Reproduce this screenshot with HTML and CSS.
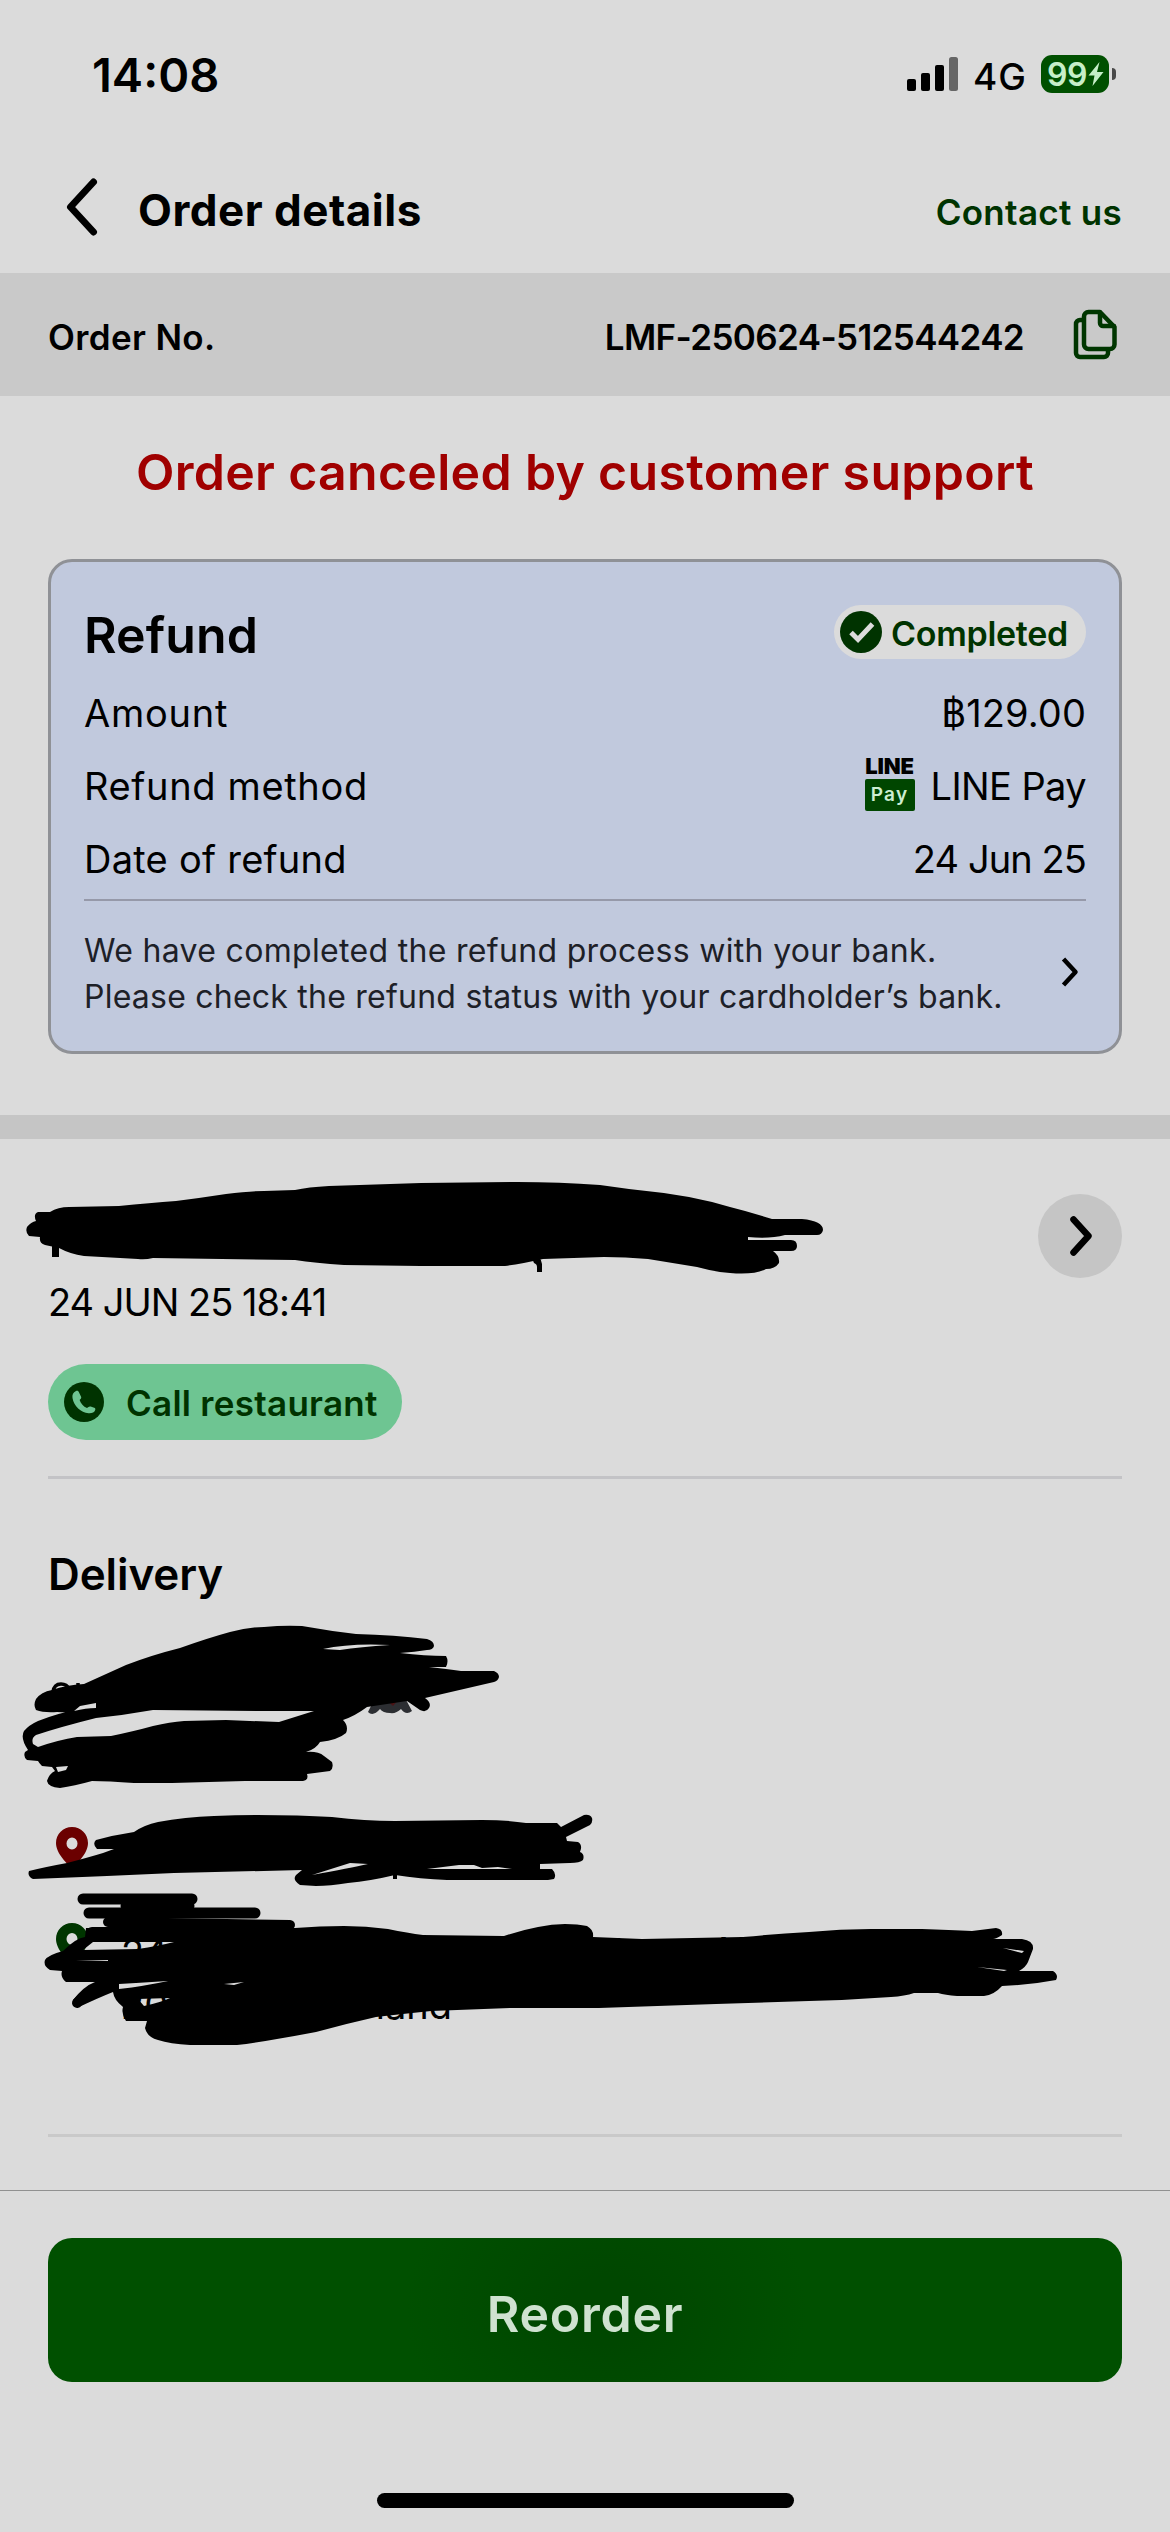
FILE: index.html
```html
<!DOCTYPE html>
<html lang="en">
<head>
<meta charset="utf-8">
<title>Order details</title>
<link rel="stylesheet" href="styles.css">
</head>
<body>
<div class="status">
  <span class="time">14:08</span>
  <div class="status-icons">
    <svg class="signal" width="52" height="34" viewBox="0 0 52 34"><rect y="22" width="9" height="12" rx="2"/><rect x="14" y="16" width="9" height="18" rx="2"/><rect x="28" y="8" width="9" height="26" rx="2"/><rect x="42" width="9" height="34" rx="2.5" fill="#666"/></svg>
    <span class="network">4G</span>
    <div class="battery">
      <div class="battery-body"><span>99</span><svg width="16" height="24" viewBox="0 0 16 24"><path d="M11.5 0L.5 13.5h6L4.5 24 15.5 10H9z" fill="#c6efc8"/></svg></div>
      <i class="battery-tip"></i>
    </div>
  </div>
</div>

<header class="header">
  <svg class="back" width="36" height="60" viewBox="0 0 36 60"><path d="M31.500 5L8.500 30l23 25" fill="none" stroke="#000" stroke-width="7" stroke-linecap="round" stroke-linejoin="round"/></svg>
  <h1>Order details</h1>
  <a class="contact">Contact us</a>
</header>

<div class="order-no">
  <span class="order-label">Order No.</span>
  <span class="order-id">LMF-250624-512544242</span>
  <svg class="copy" width="44" height="52" viewBox="0 0 44 52" fill="none" stroke="#003600" stroke-width="4.500" stroke-linejoin="round" stroke-linecap="round"><path d="M9.500 11H7a4 4 0 0 0-4 4v29a4 4 0 0 0 4 4h24a4 4 0 0 0 4-4v-2.500"/><path d="M15.500 3H27l14.500 15v17.500a4.500 4.500 0 0 1-4.500 4.500H15.500a4.500 4.500 0 0 1-4.500-4.500V7.500A4.500 4.500 0 0 1 15.500 3z"/><path d="M27 3.500V14a3 3 0 0 0 3 3h11"/></svg>
</div>

<section class="refund-section">
  <h2 class="alert">Order canceled by customer support</h2>
  <div class="card">
    <div class="row row-head">
      <span class="card-title">Refund</span>
      <span class="badge"><svg width="42" height="42" viewBox="0 0 42 42"><circle cx="21" cy="21" r="21" fill="#003300"/><path d="M11 21.500l7 7L32.500 13" fill="none" stroke="#dcdcdc" stroke-width="5"/></svg><span>Completed</span></span>
    </div>
    <div class="row"><span class="amount-label">Amount</span><span class="amount">฿129.00</span></div>
    <div class="row"><span class="method-label">Refund method</span><span class="pay"><span class="pay-logo"><b>LINE</b><i>Pay</i></span>LINE Pay</span></div>
    <div class="row"><span class="date-label">Date of refund</span><span class="date">24 Jun 25</span></div>
    <div class="note">
      <p>We have completed the refund process with your bank.<br><span>Please check the refund status with your cardholder’s bank.</span></p>
      <svg width="20" height="32" viewBox="0 0 20 32"><path d="M3.500 3l12 13-12 13" fill="none" stroke="#000" stroke-width="4.500" stroke-linejoin="round"/></svg>
    </div>
  </div>
</section>

<section class="restaurant">
  <div class="restaurant-main">
    <div class="when">24 JUN 25 18:41</div>
    <a class="call"><svg width="40" height="40" viewBox="0 0 40 40"><circle cx="20" cy="20" r="20" fill="#003300"/><path d="M12 9c-2.800 1.200-4 4-3.500 7 1.300 8.500 8.500 14.500 16 15.300 3.200.3 6-1 6.700-3.300.4-1.200 0-1.800-1-2.200l-3.600-1.200c-.8-.3-1.500 0-2.100.4l-1.500 1c-3.600-1.500-6.200-4.300-7.400-8l1.200-1.300c.5-.6.6-1.200.3-2l-2.300-4.700c-.5-1-1.500-1.500-2.800-1z" fill="#6ec592"/></svg><span>Call restaurant</span></a>
  </div>
  <span class="go"><svg width="26" height="44" viewBox="0 0 26 44"><path d="M6.500 5.500L21.500 22 6.500 38.500" fill="none" stroke="#000" stroke-width="6.500" stroke-linejoin="round" stroke-linecap="round"/></svg></span>
  <svg class="ink" viewBox="0 1139 1170 340">
    <path d="M52 1240h7v17h-7zM531 1256l3 7q3 1 3 4v5h5v-8q-1-5-4-8z"/>
    <path d="M38 1212L50 1212Q58 1207 69 1207L119 1206Q150 1203 176 1201Q200 1198 226 1194Q250 1191 264 1191L295 1190Q308 1187 329 1186L421 1183L517 1182Q560 1182 600 1185L629 1189Q660 1192 689 1197Q710 1201 730 1207Q750 1212 772 1219L802 1219Q823 1221 823 1230Q822 1235 817 1235L785 1235Q770 1239 748 1237L748 1240L791 1240Q797 1240 797 1246Q797 1251 791 1251L773 1251Q780 1256 779 1263Q775 1269 766 1269Q755 1275 730 1273Q715 1272 697 1267L648 1259Q625 1257 604 1257L543 1259Q520 1264 505 1266L421 1266L344 1265Q315 1263 295 1260L153 1258Q145 1260 138 1259L84 1256Q70 1254 59 1248L45 1245Q39 1243 40 1237L29 1236Q25 1232 27 1227Q31 1222 36 1221Q33 1214 38 1212Z"/>
  </svg>
</section>

<section class="delivery">
  <h2>Delivery</h2>
  <div class="stops">
    <svg width="32" height="42" viewBox="0 0 32 42"><path fill-rule="evenodd" d="M16 0C7 0 0 7 0 16c0 11 12 21 16 26 4-5 16-15 16-26C32 7 25 0 16 0zm0 10.500a5.500 6 0 1 1 0 12 5.500 6 0 0 1 0-12z" fill="#6b0000"/></svg>
    <svg width="32" height="42" viewBox="0 0 32 42"><path fill-rule="evenodd" d="M16 0C7 0 0 7 0 16c0 11 12 21 16 26 4-5 16-15 16-26C32 7 25 0 16 0zm0 10a5.500 6 0 1 1 0 12 5.500 6 0 0 1 0-12z" fill="#003600"/></svg>
  </div>
  <svg class="ink" viewBox="0 1479 1170 655">
    <!-- text left showing at the edges of the marker -->
    <g font-size="38"><text x="586" y="1966">Ch</text><text x="718" y="1965">N</text><text x="452" y="2019" text-anchor="end">land</text></g>
    <path d="M368 1712L376 1696H404L412 1711Q406 1716 401 1709Q396 1714 390 1713Q383 1713 380 1709Q373 1717 368 1712Z" fill="#2c2e32"/>
    <path d="M385 1699h14l-6 7z" fill="#4b1416"/>
    <path d="M53 1692Q54 1684 61 1684Q67 1684 69 1689M78 1683v6" stroke="#000" stroke-width="3.500" fill="none"/>

    <!-- name and phone -->
    <path d="M36 1710Q33 1705 36 1699Q41 1692 52 1690Q66 1685 84 1684L126 1665Q152 1655 180 1648Q208 1638 230 1632Q248 1627 264 1627Q284 1625 302 1626Q330 1631 356 1634Q395 1635 427 1639Q434 1641 434 1646Q433 1650 427 1650Q415 1652 400 1653Q425 1656 446 1656Q449 1661 446 1667L429 1667Q447 1669 461 1671L494 1671Q499 1673 499 1677Q498 1681 494 1682L425 1698Q432 1703 429 1708Q426 1713 420 1710L407 1701L367 1707Q355 1716 343 1720Q349 1726 346 1733Q338 1740 320 1742Q316 1749 306 1752Q318 1751 324 1756L332 1762Q334 1768 330 1771L307 1774Q309 1780 303 1781L245 1781L172 1783L134 1783Q108 1781 92 1781Q74 1786 60 1788Q48 1787 47 1781Q49 1774 55 1771L52 1767L42 1766Q39 1763 38 1761L27 1760Q23 1757 25 1752L28 1750Q20 1738 24 1731Q29 1725 38 1721Q58 1713 84 1708Q70 1713 57 1712Q44 1713 36 1710Z"/>
    <path d="M96 1718Q60 1727 36 1735Q31 1738 33 1744L38 1747Q58 1740 77 1737L111 1736Q135 1731 153 1726Q170 1722 184 1721L226 1720L279 1722L314 1711L268 1711L153 1710Q125 1715 96 1718Z" fill="#dbdbdb"/>
    <path d="M323 1649Q350 1643 390 1645Q360 1647 340 1650Z" fill="#dbdbdb"/>
    <path d="M80 1706L96 1703V1708Q86 1708 74 1711ZM56 1767L68 1766L66 1770L58 1772Z" fill="#dbdbdb"/>

    <!-- pickup place -->
    <path d="M97 1849Q92 1844 96 1840Q114 1835 134 1832Q144 1825 158 1822Q185 1817 214 1816Q236 1815 257 1815Q300 1815 332 1817Q365 1821 395 1821L482 1820Q508 1820 526 1823L557 1823L561 1827L584 1815Q590 1814 592 1818Q593 1822 590 1825L566 1837L567 1841L578 1842Q583 1845 580 1852Q585 1854 583 1860Q580 1863 570 1863L540 1864V1869L552 1869Q557 1874 554 1879L548 1880L447 1880Q420 1879 395 1875Q370 1881 348 1883Q330 1886 316 1886L300 1885Q292 1880 296 1875L302 1870L174 1873L107 1876L33 1879Q27 1876 29 1871Q45 1867 67 1863Q90 1857 103 1853L114 1849Z"/>
    <path d="M312 1875L350 1863L368 1864Q350 1868 312 1875ZM427 1869L459 1865L474 1865L482 1868L498 1867L512 1869Z" fill="#dbdbdb"/>
    <path d="M393 1872h4v7h-4z"/>

    <!-- drop-off address -->
    <g fill="none" stroke="#000" stroke-linecap="round"><path d="M83 1899H192" stroke-width="11"/><path d="M125 1906H190" stroke-width="9"/><path d="M89 1913H255" stroke-width="11"/><path d="M108 1922L290 1925" stroke-width="10"/><path d="M92 1933H290" stroke-width="12"/><path d="M77 2003Q86 1992 114 1985" stroke-width="10"/></g>
    <path fill-rule="evenodd" d="M86 1928H295Q320 1926 344 1926Q366 1926 388 1929Q408 1933 423 1935L504 1936Q522 1930 538 1927Q552 1924 565 1924Q578 1924 587 1926Q594 1930 593 1937L642 1939L743 1937Q775 1934 809 1932Q840 1929 871 1929L922 1929Q950 1930 972 1931L996 1928Q1003 1929 1002 1935Q996 1939 993 1939L1022 1939Q1034 1941 1033 1949L1028 1962Q1026 1967 1019 1971L1053 1971Q1059 1975 1056 1980Q1030 1985 1002 1986Q994 1995 984 1996L957 1996Q945 1995 938 1993L914 1993Q905 1996 891 1997Q850 2000 809 2001L716 2004L599 2008L510 2008L431 2011Q402 2014 376 2017Q345 2024 316 2032Q295 2036 277 2039Q255 2043 237 2045L190 2045Q170 2044 158 2040Q147 2037 145 2028L147 2021L126 2021Q121 2014 123 2007Q114 2000 113 1992Q98 1998 79 2007Q72 2004 73 2000Q84 1986 95 1982L66 1982Q60 1977 62 1971L50 1970Q43 1966 45 1960Q48 1955 63 1951Q76 1938 85 1937Z
      M93 1942L174 1942Q158 1946 138 1949L83 1950ZM119 1984L136 1983L168 1981Q145 1986 119 1989ZM138 1999L170 1998Q162 2002 144 2006ZM977 1967L1007 1970L1004 1971ZM1003 1948L1024 1951L1022 1953ZM224 1984L244 1982L234 1985ZM76 1961L108 1960L108 1961Z"/>
    <text x="121" y="1967" font-size="38">24</text>
    <text x="121" y="2019" font-size="38">20</text>
  </svg>
</section>

<footer class="footer">
  <button class="reorder">Reorder</button>
  <i class="home"></i>
</footer>
</body>
</html>
```
FILE: styles.css
```css
* { box-sizing: border-box; margin: 0; padding: 0; }
body { width: 1170px; height: 2532px; background: #dbdbdb; font-family: Inter, "Liberation Sans", sans-serif; color: #000; display: flex; flex-direction: column; overflow: hidden; }
svg { display: block; flex: none; }

/* status bar */
.status { height: 148px; display: flex; align-items: center; justify-content: space-between; padding: 0 54px 0 92px; }
.time { font-size: 47px; font-weight: 600; }
.status-icons { display: flex; align-items: center; }
.network { font-size: 37px; font-weight: 500; letter-spacing: 1px; margin: 4px 14px 0 14px; }
.battery { display: flex; align-items: center; gap: 3px; }
.battery-body { width: 68px; height: 38px; border-radius: 11px; background: #005000; color: #c6efc8; display: flex; align-items: center; gap: 1px; padding-left: 6px; font-size: 32px; font-weight: 600; letter-spacing: -0.5px; }
.battery-tip { width: 4px; height: 12px; border-radius: 0 4px 4px 0; background: #4a4a4a; }

/* title bar */
.header { height: 125px; display: flex; align-items: center; padding: 0 48px 0 62px; }
.back { margin-top: -7px; }
.header h1 { font-size: 44px; font-weight: 700; letter-spacing: .5px; margin: -1px 0 0 40px; }
.contact { margin: 2px 0 0 auto; font-size: 35px; font-weight: 600; letter-spacing: .3px; color: #003300; }

.order-no { height: 123px; background: #c9c9c9; display: flex; align-items: center; padding: 4px 53px 0 48px; font-size: 35px; font-weight: 600; }
.order-label { letter-spacing: .36px; }
.order-id { margin-left: auto; letter-spacing: -.63px; }
.copy { margin: -4px 0 0 49px; }

/* refund card */
.refund-section { height: 743px; padding: 46px 48px 0; border-bottom: 24px solid #c5c5c5; }
.alert { font-size: 50px; line-height: 60px; font-weight: 600; letter-spacing: .3px; color: #a00000; text-align: center; }
.card { margin-top: 57px; height: 495px; border: 3px solid #8f9196; border-radius: 24px; background: #c1c9dd; padding: 34px 33px 0; }
.row { display: flex; align-items: center; justify-content: space-between; height: 73px; font-size: 38px; }
.row-head { height: 80px; }
.card-title { font-size: 50px; font-weight: 600; letter-spacing: .1px; margin-top: -2px; }
.badge { display: flex; align-items: center; gap: 9px; width: 252px; height: 54px; margin-top: -8px; border-radius: 27px; background: #dbdbdb; padding-left: 6px; font-size: 34px; font-weight: 600; letter-spacing: -.3px; color: #003300; }
.badge svg { margin-top: -1px; }
.badge span { margin-top: 2px; }
.amount-label { letter-spacing: .76px; }
.amount { letter-spacing: .1px; }
.method-label { letter-spacing: .65px; }
.date-label { letter-spacing: .25px; }
.date { letter-spacing: -.91px; }
.pay { display: flex; align-items: center; gap: 16px; letter-spacing: -.6px; }
.pay-logo { display: flex; flex-direction: column; width: 50px; height: 53px; margin-top: -3px; align-items: center; justify-content: space-between; letter-spacing: 0; }
.pay-logo b { font-size: 22px; font-weight: 900; line-height: 16px; letter-spacing: -.2px; }
.pay-logo i { width: 50px; height: 32px; border-radius: 2px; background: #004600; color: #cdeed2; font: 600 19px/31px Inter, sans-serif; letter-spacing: 1.2px; text-align: center; }
.note { display: flex; align-items: center; justify-content: space-between; margin-top: 4px; border-top: 2px solid #9699a9; padding: 27px 6px 0 0; font-size: 32px; line-height: 46px; letter-spacing: .32px; color: #1d2027; }
.note span { letter-spacing: .23px; }
.note svg { margin-top: -4px; }

/* restaurant */
.restaurant { position: relative; height: 340px; display: flex; justify-content: space-between; align-items: flex-start; margin: 0 48px; border-bottom: 3px solid #c3c3c6; }
.restaurant-main { padding-top: 138px; }
.when { font-size: 38px; line-height: 50px; letter-spacing: -1px; }
.call { display: flex; align-items: center; gap: 22px; width: 354px; height: 76px; margin-top: 37px; border-radius: 38px; background: #6ec592; padding-left: 16px; font-size: 35px; font-weight: 600; letter-spacing: .27px; color: #003300; }
.call svg { margin-top: -1px; }
.call span { margin-top: 2px; }
.go { width: 84px; height: 84px; margin-top: 55px; border-radius: 50%; background: #c5c5c5; display: grid; place-items: center; }

/* marker strokes drawn over a section */
.ink { position: absolute; left: -48px; top: 0; width: 1170px; }

/* delivery */
.delivery { position: relative; height: 658px; margin: 0 48px; padding-top: 68px; border-bottom: 3px solid #c9c9c9; }
.delivery h2 { font-size: 44px; line-height: 54px; font-weight: 600; letter-spacing: -.1px; }
.stops { display: grid; gap: 54px; margin: 226px 0 0 8px; }

/* footer */
.footer { margin-top: 53px; height: 342px; border-top: 1px solid #909090; padding: 47px 48px 24px; display: flex; flex-direction: column; align-items: center; justify-content: space-between; }
.reorder { width: 1074px; height: 144px; border: 0; border-radius: 24px; background: radial-gradient(ellipse 200px 170px at 52% 50%, #004700 20%, #005000 100%); color: #cfe2d0; font: 600 50px Inter, sans-serif; letter-spacing: .75px; padding-top: 7px; }
.home { width: 417px; height: 15px; border-radius: 7.5px; background: #000; }
```
